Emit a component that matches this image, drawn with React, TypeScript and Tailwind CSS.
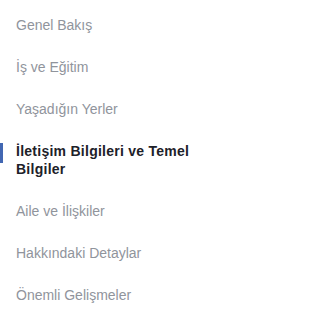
const items = [
  "Genel Bakış",
  "İş ve Eğitim",
  "Yaşadığın Yerler",
  "İletişim Bilgileri ve Temel Bilgiler",
  "Aile ve İlişkiler",
  "Hakkındaki Detaylar",
  "Önemli Gelişmeler",
];

const ACTIVE = 3;

export default function App() {
  return (
    <div className="w-[233px] h-[316px] bg-white pt-[4px] font-['Liberation_Sans',Arial,sans-serif]">
      <ul>
        {items.map((label, i) => (
          <li key={label} className="relative">
            {i === ACTIVE && (
              <span className="absolute left-0 top-[13px] w-[3px] h-[20px] bg-[#4267b2]" />
            )}
            <a
              href="#"
              className={
                i === ACTIVE
                  ? "block pl-[16px] pr-4 py-3 text-[14px] leading-[18px] font-bold tracking-[0.26px] text-[#1d2129]"
                  : "block pl-[16px] pr-4 py-3 text-[14px] leading-[18px] text-[#90949c]"
              }
            >
              {label}
            </a>
          </li>
        ))}
      </ul>
    </div>
  );
}
